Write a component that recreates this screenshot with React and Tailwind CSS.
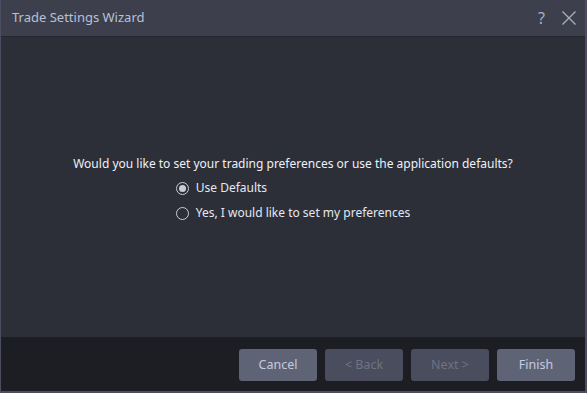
const Radio = ({ checked, label }) => (
  <label className="flex items-center gap-[7px] h-[25px] text-[12px] text-[#e4e8f2]">
    <span className="w-[13px] h-[13px] rounded-full border border-[#c9ccd6] flex items-center justify-center">
      {checked && <span className="w-[7px] h-[7px] rounded-full bg-[#c9ccd6]" />}
    </span>
    {label}
  </label>
);

const Button = ({ children, disabled }) => (
  <button
    className={
      disabled
        ? "w-[78px] h-[32px] rounded-[3px] bg-[#4a4d5d] text-[#6e7283] text-[12.5px]"
        : "w-[78px] h-[32px] rounded-[3px] bg-[#5f6376] text-[#c4cbe0] text-[12.5px]"
    }
  >
    {children}
  </button>
);

export default function App() {
  return (
    <div
      className="w-[587px] h-[393px] bg-[#4b4e60] pl-[1px] pr-[2px] pb-[2px] flex flex-col"
      style={{ fontFamily: '"Noto Sans", "Open Sans", sans-serif' }}
    >
      <div className="h-[37px] bg-[#3d404c] border-b border-[#25272e] flex items-center justify-between pl-[11px] pr-[8px] shrink-0">
        <span className="text-[13px] text-[#b7c0da]">Trade Settings Wizard</span>
        <div className="flex items-center gap-[16px] text-[#a9aec2]">
          <span className="text-[16px] leading-none">?</span>
          <svg width="16" height="16" viewBox="0 0 16 16" fill="none" stroke="currentColor" strokeWidth="1.3">
            <path d="M1.5 1.5 L14.5 14.5 M14.5 1.5 L1.5 14.5" />
          </svg>
        </div>
      </div>
      <div className="flex-1 bg-[#2c2f38] flex flex-col items-center justify-center pt-[6px]">
        <p className="text-[12px] text-[#eef1f7] mb-[3px]">
          Would you like to set your trading preferences or use the application defaults?
        </p>
        <div className="flex flex-col">
          <Radio checked label="Use Defaults" />
          <Radio label="Yes, I would like to set my preferences" />
        </div>
      </div>
      <div className="h-[54px] bg-[#1d1e23] flex items-center justify-end gap-[8px] pr-[10px] pt-[2px] shrink-0">
        <Button>Cancel</Button>
        <Button disabled>&lt; Back</Button>
        <Button disabled>Next &gt;</Button>
        <Button>Finish</Button>
      </div>
    </div>
  );
}
